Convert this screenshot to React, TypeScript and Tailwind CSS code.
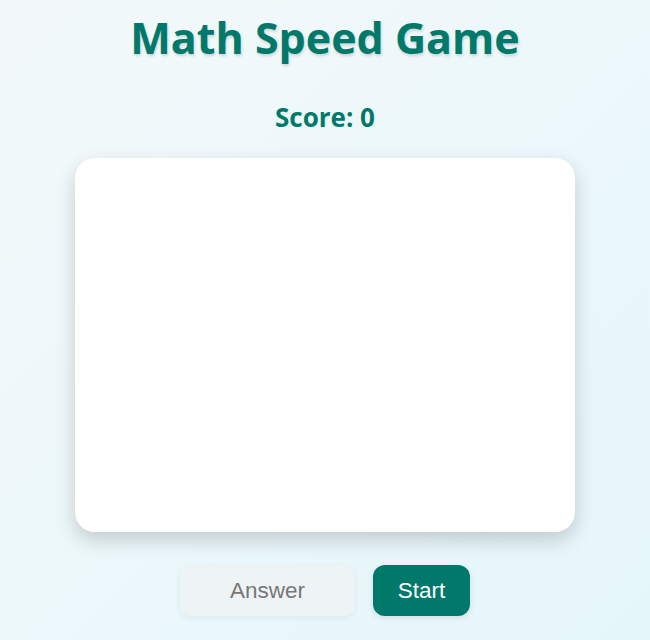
export default function App() {
  return (
    <div className="min-h-[640px] w-full bg-gradient-to-br from-[#f3f9fa] to-[#e5f6fb] flex flex-col items-center font-['Open_Sans',sans-serif]">
      <h1 className="mt-[12px] text-[43px] leading-[52px] font-bold text-[#00796b] [text-shadow:1px_2px_3px_rgba(0,0,0,0.15)]">
        Math Speed Game
      </h1>
      <div className="mt-[37px] text-[26px] leading-[32px] font-bold text-[#00796b]">Score: 0</div>
      <div className="mt-[25px] w-[500px] h-[374px] bg-white rounded-[20px] shadow-[0_8px_20px_rgba(0,0,0,0.18)]"></div>
      <div className="mt-[33px] flex gap-[18px] font-['Liberation_Sans',Arial,sans-serif]">
        <input
          placeholder="Answer"
          className="w-[175px] h-[51px] rounded-[10px] bg-[#eef4f6] text-center text-[22.5px] text-[#333] placeholder:text-[#777] outline-none shadow-[0_2px_6px_rgba(0,0,0,0.06)]"
        />
        <button className="w-[97px] h-[51px] rounded-[12px] bg-[#00796b] text-white text-[22.5px] shadow-[0_2px_6px_rgba(0,0,0,0.1)]">
          Start
        </button>
      </div>
    </div>
  );
}
